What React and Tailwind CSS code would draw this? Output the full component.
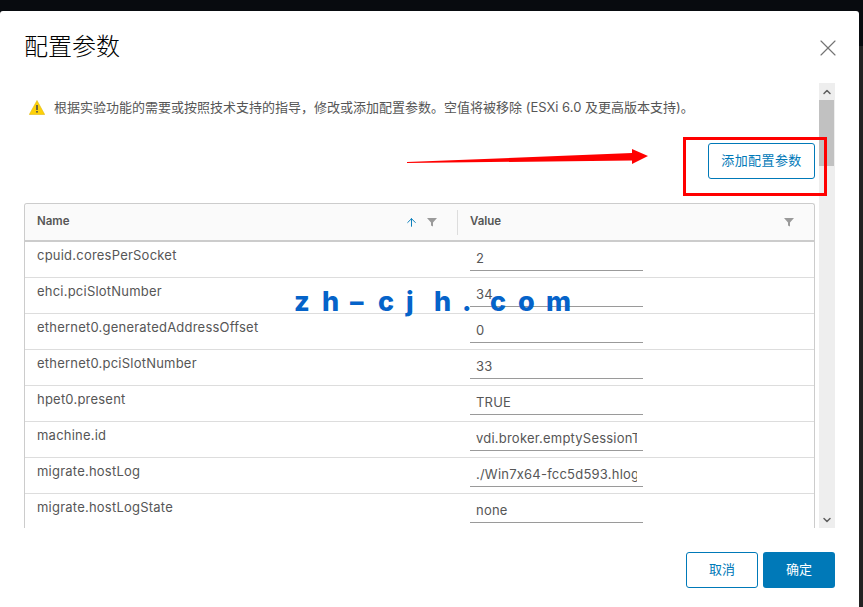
import React from "react";
import { X, ChevronUp, ChevronDown, ArrowUp } from "lucide-react";

const rows = [
  ["cpuid.coresPerSocket", "2"],
  ["ehci.pciSlotNumber", "34"],
  ["ethernet0.generatedAddressOffset", "0"],
  ["ethernet0.pciSlotNumber", "33"],
  ["hpet0.present", "TRUE"],
  ["machine.id", "vdi.broker.emptySessionTicket"],
  ["migrate.hostLog", "./Win7x64-fcc5d593.hlog"],
  ["migrate.hostLogState", "none"],
];

const watermark = ["z", "h", "–", "c", "j", "h", ".", "c", "o", "m"];

const FilterIcon = ({ className }) => (
  <svg viewBox="0 0 10 10" className={className} fill="currentColor">
    <path d="M0 1h10L6 5.5V9.5L4 8.5V5.5z" />
  </svg>
);

const App = () => {
  return (
    <div className="relative w-[863px] h-[607px] overflow-hidden bg-[#222222] pt-[11px] font-['Inter','Noto_Sans_CJK_SC',sans-serif] text-[13px] text-[#565656] [font-feature-settings:'calt'_0]">
      {/* Dark band of the page behind the modal */}
      <div className="absolute inset-x-0 top-0 h-[46px] bg-[#080b0f]" />

      <div className="relative w-[859px] h-[596px] bg-white flex flex-col rounded-t-[3px]">
        {/* Header */}
        <div className="flex items-start justify-between h-[72px] pl-6 pr-[17px] pt-[18px]">
          <h1 className="text-[24px] leading-[36px] text-black font-light">配置参数</h1>
          <X className="w-[28px] h-[28px] mt-[5px] text-[#747474]" strokeWidth={1} />
        </div>

        {/* Scrolling body */}
        <div className="flex h-[445px] pl-6 pr-6">
          <div className="flex-1 overflow-hidden">
            <div className="flex items-center gap-[9px] h-[48px] pl-[5px]">
              <svg viewBox="0 0 16 15" className="w-4 h-[15px]">
                <path d="M8 .5 15.7 14.5H.3z" fill="#fdd008" stroke="#e0bb10" strokeWidth="0.6" />
                <rect x="7.2" y="5" width="1.6" height="5" fill="#4a4a4a" />
                <rect x="7.2" y="11" width="1.6" height="1.6" fill="#4a4a4a" />
              </svg>
              <span className="leading-[18px]">
                根据实验功能的需要或按照技术支持的指导，修改或添加配置参数。空值将被移除 (ESXi 6.0 及更高版本支持)。
              </span>
            </div>
            <div className="flex justify-end h-[72px] pt-[12px]">
              <button className="w-[107px] h-9 rounded-[3px] border border-[#0079b8] text-[#0079b8] tracking-[0.4px] text-[13px]">
                添加配置参数
              </button>
            </div>
            <div className="w-[791px] rounded-t-[3px] border border-b-0 border-[#ccc]">
              <div className="flex h-[38px] items-center bg-[#fafafa] border-b-2 border-[#ccc] font-semibold text-[11.5px] rounded-t-[3px]">
                <div className="w-[433px] flex items-center pl-3 pr-[20px] border-r border-[#ddd] h-[25px]">
                  <span className="flex-1">Name</span>
                  <ArrowUp className="w-[13px] h-[13px] text-[#0079b8] mr-[9px]" strokeWidth={1.75} />
                  <FilterIcon className="w-[10px] h-[10px] text-[#9a9a9a]" />
                </div>
                <div className="flex-1 flex items-center pl-3 pr-[20px]">
                  <span className="flex-1">Value</span>
                  <FilterIcon className="w-[10px] h-[10px] text-[#9a9a9a]" />
                </div>
              </div>
              {rows.map(([name, value]) => (
                <div key={name} className="flex h-[36px] border-b border-[#ddd] tracking-[0.22px]">
                  <div className="w-[433px] pl-3 pt-[4px] leading-[18px]">{name}</div>
                  <div className="flex-1 pl-3">
                    <input
                      readOnly
                      value={value}
                      className="w-[173px] h-[24px] mt-[5px] px-[6px] pb-[2px] border-b border-[#9a9a9a] outline-none bg-transparent text-[#565656]"
                    />
                  </div>
                </div>
              ))}
            </div>
          </div>

          {/* Scrollbar */}
          <div className="w-4 ml-1 flex flex-col bg-[#eeeeee] text-[#5f5f5f]">
            <div className="h-[17px] flex items-center justify-center">
              <ChevronUp className="w-[12px] h-[12px]" strokeWidth={3} />
            </div>
            <div className="h-[66px] bg-[#c1c1c1] mr-px" />
            <div className="flex-1" />
            <div className="h-[17px] flex items-center justify-center">
              <ChevronDown className="w-[12px] h-[12px]" strokeWidth={3} />
            </div>
          </div>
        </div>

        {/* Footer */}
        <div className="flex justify-end gap-[5px] pt-6 pr-6">
          <button className="w-[72px] h-9 rounded-[3px] border border-[#0079b8] text-[#0079b8] text-[13px]">取消</button>
          <button className="w-[72px] h-9 rounded-[3px] bg-[#0079b8] text-white text-[13px]">确定</button>
        </div>
      </div>

      {/* Annotations drawn over the screenshot */}
      <div className="absolute left-[683px] top-[137px] w-[144px] h-[59px] border-[3px] border-[#ff0000]" />
      <svg className="absolute left-[405px] top-[145px]" width="250" height="25" viewBox="405 145 250 25">
        <path d="M407 162 632 153V149L648 156 632 164V160.5L407 163z" fill="#ff0000" />
      </svg>
      <div className="absolute left-[294px] top-[286px] flex text-[#0563c9] text-[27px] leading-[32px] font-extrabold">
        {watermark.map((ch, i) => (
          <span key={i} className="w-[28px]">{ch}</span>
        ))}
      </div>
    </div>
  );
};

export default App;
